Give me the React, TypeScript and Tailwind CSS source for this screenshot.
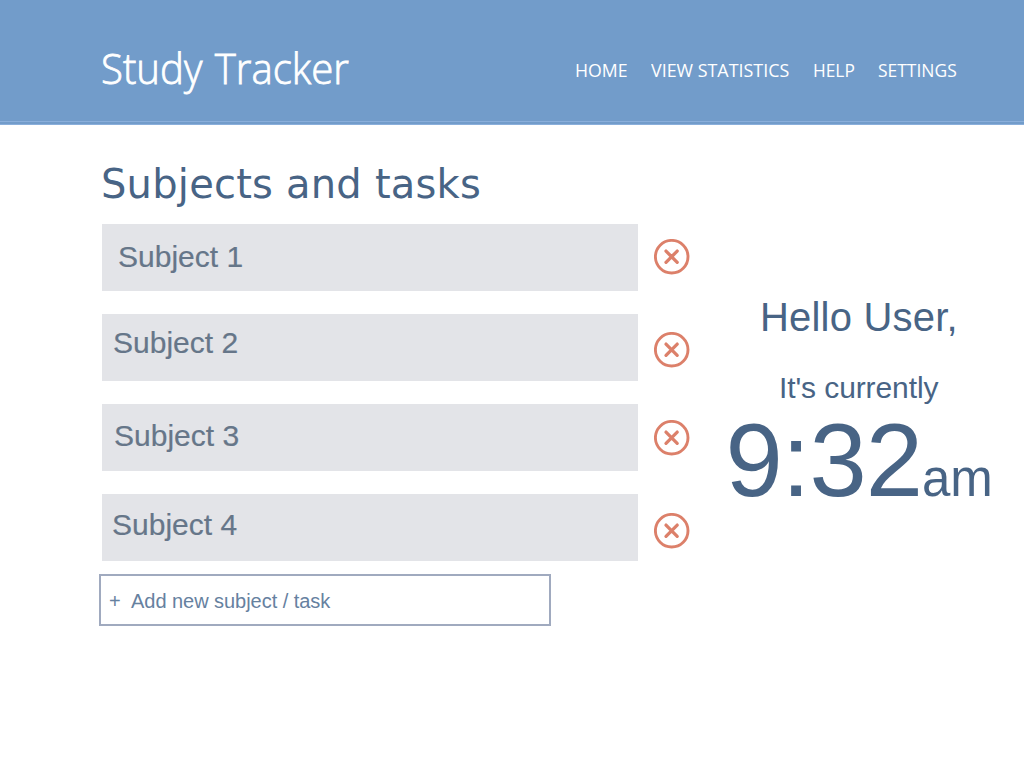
const subjects = [
  { name: 'Subject 1', text: 'pl-4 pt-4', icon: 'mt-[15px]' },
  { name: 'Subject 2', text: 'pl-[11px] pt-3', icon: 'mt-[18px]' },
  { name: 'Subject 3', text: 'pl-3 pt-[15px]', icon: 'mt-4' },
  { name: 'Subject 4', text: 'pl-[10px] pt-[14px]', icon: 'mt-[19px]' },
];

const links = [
  { label: 'HOME', width: 'w-[76px]', scale: 'scale-x-[0.957]' },
  { label: 'VIEW STATISTICS', width: 'w-[162px]', scale: 'scale-x-[0.966]' },
  { label: 'HELP', width: 'w-[65px]', scale: 'scale-x-[0.935]' },
  { label: 'SETTINGS', width: 'w-[80px]', scale: 'scale-x-[0.943]' },
];

function RemoveIcon() {
  return (
    <svg className="size-9" viewBox="0 0 36 36" fill="none" stroke="#dc806a" strokeLinecap="round">
      <circle cx="17.7" cy="17.7" r="16.3" strokeWidth="2.9" />
      <path d="M12 12.1 23.2 23.3M23.2 12.1 12 23.3" strokeWidth="3.3" />
    </svg>
  );
}

export default function App() {
  return (
    <div className="h-[768px] w-[1024px] overflow-hidden bg-white font-['Liberation_Sans',Arial,sans-serif] text-[#486485]">
      <header className="h-[125px] bg-[#729cca]">
        <div className="flex h-[121px] text-white">
          <h1 className="ml-[101px] mt-[39px] w-[474px] whitespace-nowrap font-['Open_Sans',sans-serif] text-[42.5px] font-light leading-[58px]">
            <span className="inline-block origin-left scale-x-[0.945] [word-spacing:2px] [-webkit-text-stroke:0.8px_white]">
              Study Tracker
            </span>
          </h1>
          <nav className="mt-[58px] flex font-['Open_Sans',sans-serif] text-[18.5px] leading-6">
            {links.map((link) => (
              <a key={link.label} className={`${link.width} whitespace-nowrap`}>
                <span className={`inline-block origin-left ${link.scale}`}>{link.label}</span>
              </a>
            ))}
          </nav>
        </div>
        <div className="h-px bg-[#8aafdb]" />
        <div className="mt-[2px] h-px bg-[#8aafdb]" />
      </header>
      <main className="flex">
        <section className="w-[700px] pl-[102px]">
          <h2 className="-ml-px mt-[35px] h-[64px] whitespace-nowrap font-['DejaVu_Sans',Verdana,sans-serif] text-[40px] leading-[48px] tracking-[0.22px]">
            Subjects and tasks
          </h2>
          <ul className="flex flex-col gap-[23px]">
            {subjects.map((subject) => (
              <li key={subject.name} className="flex h-[67px] gap-4">
                <div className={`w-[535.5px] bg-[#e3e4e8] text-[30px] leading-[34px] text-[#667689] [-webkit-text-stroke:0.2px_#667689] ${subject.text}`}>
                  {subject.name}
                </div>
                <button className={`size-9 ${subject.icon}`} aria-label="Remove">
                  <RemoveIcon />
                </button>
              </li>
            ))}
          </ul>
          <button className="-ml-[3px] mt-[13px] flex h-[52px] w-[452px] items-center border-2 border-[#a0aabf] pl-2 pt-[2px] text-[20px] tracking-[-0.04px] text-[#66819f]">
            <span className="w-[22px] text-left">+</span>
            <span>Add new subject / task</span>
          </button>
        </section>
        <aside className="w-[324px] whitespace-nowrap">
          <p className="ml-[60px] mt-[169px] text-[40px] leading-[46px] tracking-[0.2px]">Hello User,</p>
          <p className="ml-[79px] mt-[31px] text-[30px] leading-[34px] tracking-[-0.1px]">It's currently</p>
          <p className="ml-[25.5px] mt-[-4px] text-[103px] leading-[120px] tracking-[-1px]">
            9:32<span className="text-[51px] tracking-normal">am</span>
          </p>
        </aside>
      </main>
    </div>
  );
}
